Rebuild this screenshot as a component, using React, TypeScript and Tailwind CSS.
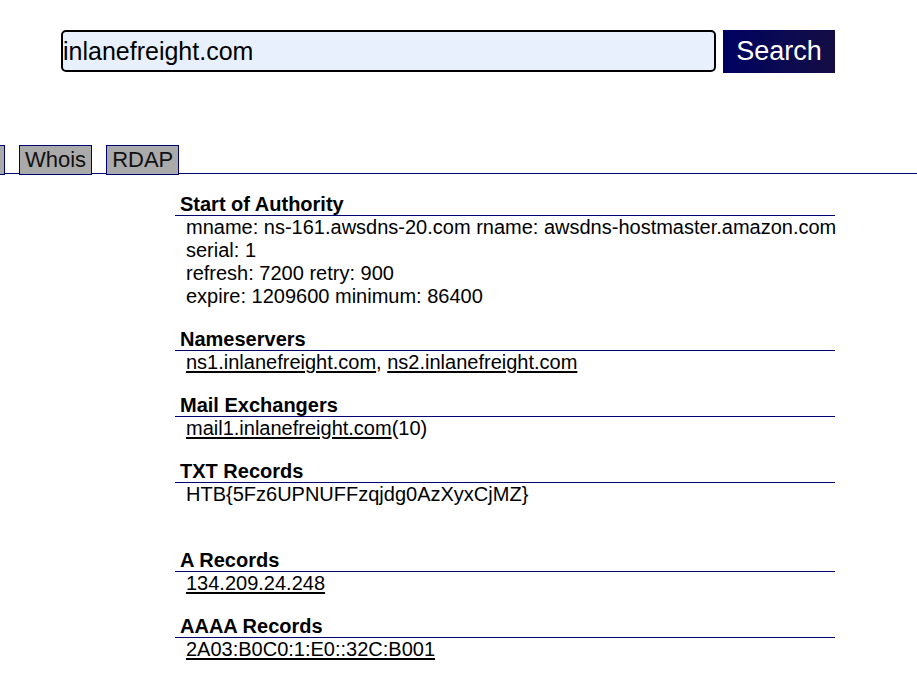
import React from "react";

type Section = { title: string; lines: React.ReactNode[] };

function Link({ children }: { children: React.ReactNode }) {
  return (
    <a href="#" className="text-black underline underline-offset-[2px]">
      {children}
    </a>
  );
}

const sections: Section[] = [
  {
    title: "Start of Authority",
    lines: [
      "mname: ns-161.awsdns-20.com rname: awsdns-hostmaster.amazon.com",
      "serial: 1",
      "refresh: 7200 retry: 900",
      "expire: 1209600 minimum: 86400",
    ],
  },
  {
    title: "Nameservers",
    lines: [
      <>
        <Link>ns1.inlanefreight.com</Link>, <Link>ns2.inlanefreight.com</Link>
      </>,
    ],
  },
  {
    title: "Mail Exchangers",
    lines: [
      <>
        <Link>mail1.inlanefreight.com</Link>(10)
      </>,
    ],
  },
  {
    title: "TXT Records",
    lines: ["HTB{5Fz6UPNUFFzqjdg0AzXyxCjMZ}", "\u00a0"],
  },
  {
    title: "A Records",
    lines: [<Link>134.209.24.248</Link>],
  },
  {
    title: "AAAA Records",
    lines: [<Link>2A03:B0C0:1:E0::32C:B001</Link>],
  },
];

const tabs = ["Whois", "RDAP"];

export default function App() {
  return (
    <div className="min-h-[693px] w-[917px] overflow-hidden bg-white font-['Liberation_Sans',Arial,sans-serif] text-black">
      {/* search bar */}
      <form
        onSubmit={(e) => e.preventDefault()}
        className="ml-[61px] flex items-start gap-[7px] pt-[30px]"
      >
        <input
          type="text"
          defaultValue="inlanefreight.com"
          className="h-[42px] w-[655px] rounded-[5px] border-2 border-black bg-[#e8f0fe] px-0 text-[25px] leading-none text-black outline-none"
        />
        <button
          type="submit"
          className="h-[43px] w-[112px] bg-gradient-to-r from-[#000062] to-[#140d44] text-[27px] leading-none text-white"
        >
          Search
        </button>
      </form>

      {/* tabs — first one (DNS) runs off the left edge */}
      <div className="mt-[71px] flex h-[30px] items-end gap-[14px] border-b border-[#000070]">
        <span
          aria-label="DNS"
          className="-mb-[2px] -ml-[55px] h-[30px] w-[60px] border border-[#000070] bg-[#aaaaaa]"
        />
        {tabs.map((t) => (
          <button
            key={t}
            className="-mb-[2px] h-[30px] border border-[#000070] bg-[#aaaaaa] px-[5px] text-[22px] leading-none text-[#111]"
          >
            {t}
          </button>
        ))}
      </div>

      {/* records */}
      <div className="ml-[175px] mt-[19px] w-[660px]">
        {sections.map((s) => (
          <div key={s.title} className="mb-[20px]">
            <h3 className="border-b border-[#000070] pl-[5px] text-[20px] font-bold leading-[22px]">
              {s.title}
            </h3>
            <div className="whitespace-nowrap pl-[11px] text-[20px] leading-[23px]">
              {s.lines.map((l, i) => (
                <div key={i}>{l}</div>
              ))}
            </div>
          </div>
        ))}
      </div>
    </div>
  );
}
